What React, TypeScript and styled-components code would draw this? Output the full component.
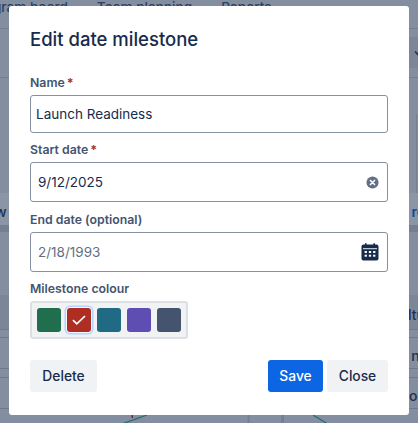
import React from 'react';
import styled, { createGlobalStyle } from 'styled-components';

const GlobalStyle = createGlobalStyle`
  html, body {
    margin: 0;
    padding: 0;
    background: #8590a2;
  }
  * {
    box-sizing: border-box;
  }
`;

const Page = styled.div`
  position: relative;
  width: 418px;
  height: 423px;
  overflow: hidden;
  font-family: Inter, 'Liberation Sans', sans-serif;
  color: #172b4d;
`;

const Backdrop = styled.div`
  display: flex;
  flex-direction: column;
  height: 100%;
  background: #838ea0;
`;

const Nav = styled.div`
  display: flex;
  gap: 29px;
  height: 29px;
  padding-top: 1px;
  margin-left: -29px;
  border-bottom: 1px solid #75808f;
  font-size: 13.6px;
  font-weight: 500;
  color: #2e4060;
  white-space: nowrap;
  line-height: 13px;
`;

const Band = styled.div<{ $h: number; $bg?: string; $line?: string }>`
  display: flex;
  justify-content: space-between;
  align-items: center;
  height: ${p => p.$h}px;
  padding-top: 5px;
  background: ${p => p.$bg ?? 'transparent'};
  border-bottom: ${p => (p.$line ? `1px solid ${p.$line}` : 'none')};
  font-size: 14px;
  font-weight: 500;
  white-space: nowrap;
  overflow: hidden;
`;

const ToolbarBand = styled.div`
  display: flex;
  justify-content: flex-end;
  align-items: center;
  height: 31px;
  margin-left: 120px;
  background: #7b8699;
`;

const ColumnRule = styled.div`
  align-self: flex-end;
  width: 1px;
  height: 79px;
  margin-right: 1px;
  background: #76818f;
`;

const BandLeft = styled.span`
  margin-left: -5px;
  color: #1f2f4f;
`;

const BandRight = styled.span<{ $color?: string }>`
  margin-right: -7px;
  font-weight: ${p => (p.$color ? 600 : 500)};
  color: ${p => p.$color ?? '#1f2f4f'};
`;

const Chevron = styled.svg`
  margin-right: -4px;
`;

const Links = styled.svg`
  position: absolute;
  left: 0;
  bottom: 0;
`;

const Modal = styled.div`
  position: absolute;
  left: 9px;
  top: 6px;
  width: 400px;
  height: 409px;
  padding: 21px 21px 23px;
  display: flex;
  flex-direction: column;
  background: #fff;
  border-radius: 3px;
`;

const Title = styled.h1`
  margin: 0 0 24px;
  font-size: 18.5px;
  line-height: 25px;
  font-weight: 500;
  color: #172b4d;
`;

const Field = styled.div<{ $gap?: number }>`
  display: flex;
  flex-direction: column;
  margin-bottom: ${p => p.$gap ?? 0}px;
`;

const Label = styled.label`
  display: flex;
  align-items: center;
  gap: 2px;
  height: 13px;
  margin-bottom: 6px;
  font-size: 12.3px;
  font-weight: 600;
  line-height: 13px;
  color: #44546f;
`;

const Star = styled.span`
  color: #ae2e24;
  font-weight: 700;
`;

const InputBox = styled.div<{ $h: number }>`
  display: flex;
  align-items: center;
  height: ${p => p.$h}px;
  border: 1px solid #8590a2;
  border-radius: 3px;
  background: #fff;
`;

const NameInput = styled.input`
  flex: 1;
  min-width: 0;
  height: 100%;
  padding: 0 5px;
  border: 0;
  outline: 0;
  background: transparent;
  font: 400 13.5px Inter, 'Liberation Sans', sans-serif;
  color: #172b4d;
`;

const DateInput = styled(NameInput)<{ $muted?: boolean }>`
  padding: 0 7px;
  font-size: 13.5px;
  color: ${p => (p.$muted ? '#626f86' : '#172b4d')};
`;

const IconSlot = styled.span<{ $right: number }>`
  display: flex;
  align-items: center;
  justify-content: center;
  width: 24px;
  height: 24px;
  margin-right: ${p => p.$right}px;
`;

const Palette = styled.div`
  display: flex;
  align-self: flex-start;
  gap: 6px;
  padding: 5px;
  border: 2px solid #dcdfe4;
  border-radius: 3px;
  background: #f1f2f4;
`;

const Swatch = styled.button<{ $color: string; $selected?: boolean }>`
  display: flex;
  align-items: center;
  justify-content: center;
  width: 24px;
  height: 24px;
  padding: 0;
  border: 0;
  border-radius: 3px;
  background: ${p => p.$color};
  box-shadow: ${p => (p.$selected ? '0 0 0 1px #f4f8ff, 0 0 0 2.5px #b3d4ff' : 'none')};
`;

const Footer = styled.div`
  display: flex;
  justify-content: space-between;
  margin-top: auto;
`;

const ButtonGroup = styled.div`
  display: flex;
  gap: 4px;
`;

const Button = styled.button<{ $primary?: boolean; $w: number }>`
  width: ${p => p.$w}px;
  height: 32px;
  padding: 0;
  border: 0;
  border-radius: 3px;
  background: ${p => (p.$primary ? '#0c66e4' : '#f1f2f4')};
  color: ${p => (p.$primary ? '#fff' : '#172b4d')};
  font: 500 13.8px Inter, 'Liberation Sans', sans-serif;
`;

const ClearIcon = () => (
  <svg width="13" height="13" viewBox="0 0 14 14">
    <circle cx="7" cy="7" r="6.5" fill="#626f86" />
    <path d="M4.8 4.8l4.4 4.4M9.2 4.8l-4.4 4.4" stroke="#fff" strokeWidth="1.7" strokeLinecap="round" />
  </svg>
);

const CalendarIcon = () => (
  <svg width="20" height="20" viewBox="0 0 20 20">
    <path
      fill="#172b4d"
      d="M3.5 2.5H5V1.2h1.6v1.3h6.8V1.2H15v1.3h1.5A2 2 0 0 1 18.5 4.5v12a2 2 0 0 1-2 2h-13a2 2 0 0 1-2-2v-12a2 2 0 0 1 2-2z"
    />
    <path fill="#fff" d="M3 6.2h14v1H3z" opacity="0.9" />
    <g fill="#fff">
      <rect x="4.6" y="9" width="2.3" height="2" />
      <rect x="8.85" y="9" width="2.3" height="2" />
      <rect x="13.1" y="9" width="2.3" height="2" />
      <rect x="4.6" y="12.7" width="2.3" height="2" />
      <rect x="8.85" y="12.7" width="2.3" height="2" />
      <rect x="13.1" y="12.7" width="2.3" height="2" />
    </g>
  </svg>
);

const colours = [
  { id: 'green', value: '#216e4e' },
  { id: 'red', value: '#ae2e24', selected: true },
  { id: 'teal', value: '#206a83' },
  { id: 'purple', value: '#5e4db2' },
  { id: 'slate', value: '#44546f' },
];

function App() {
  return (
    <Page>
      <GlobalStyle />
      <Backdrop>
        <Nav>
          <span>Program board</span>
          <span>Team planning</span>
          <span>Reports</span>
        </Nav>
        <Band $h={8} />
        <ToolbarBand>
          <Chevron width="8" height="6" viewBox="0 0 8 6">
            <path d="M1 1.5l3 3 3-3" fill="none" stroke="#1f2f4f" strokeWidth="1.6" />
          </Chevron>
        </ToolbarBand>
        <Band $h={10} $line="#737e90" />
        <Band $h={115}>
          <span />
          <ColumnRule />
        </Band>
        <Band $h={32} $bg="#8a95a6">
          <BandLeft>w</BandLeft>
          <BandRight $color="#0c4a9e">re</BandRight>
        </Band>
        <Band $h={7} $bg="#747f92" />
        <Band $h={63} />
        <Band $h={35} $bg="#7b8698" $line="#6e7a8c">
          <span />
          <BandRight>ltu</BandRight>
        </Band>
        <Band $h={8} $line="#6e7a8c" />
        <Band $h={31} $line="#6e7a8c">
          <span />
          <BandRight>nr</BandRight>
        </Band>
        <Band $h={9} $line="#6e7a8c" />
        <Band $h={31} $line="#6e7a8c">
          <span />
          <BandRight>os</BandRight>
        </Band>
      </Backdrop>
      <Links width="418" height="8" viewBox="0 415 418 8">
        <path d="M247.5 415h2v8h-2zM281 415h3v8h-3z" fill="#747f92" />
        <path d="M123 423.5L147 415M313 415L327 423.5" fill="none" stroke="#1f6f63" strokeWidth="1.2" />
        <path d="M131.5 415h1.5v3h-1.5z" fill="#7a2340" />
      </Links>
      <Modal>
        <Title>Edit date milestone</Title>
        <Field $gap={10}>
          <Label>
            Name<Star>*</Star>
          </Label>
          <InputBox $h={38}>
            <NameInput readOnly value="Launch Readiness" />
          </InputBox>
        </Field>
        <Field $gap={11}>
          <Label>
            Start date<Star>*</Star>
          </Label>
          <InputBox $h={40}>
            <DateInput readOnly value="9/12/2025" />
            <IconSlot $right={3}>
              <ClearIcon />
            </IconSlot>
          </InputBox>
        </Field>
        <Field $gap={10}>
          <Label>End date (optional)</Label>
          <InputBox $h={40}>
            <DateInput $muted readOnly value="2/18/1993" />
            <IconSlot $right={5}>
              <CalendarIcon />
            </IconSlot>
          </InputBox>
        </Field>
        <Field>
          <Label>Milestone colour</Label>
          <Palette>
            {colours.map(c => (
              <Swatch key={c.id} $color={c.value} $selected={c.selected}>
                {c.selected && (
                  <svg width="14" height="10" viewBox="0 0 14 10">
                    <path d="M1 5.2l3.8 3.6L13 1" fill="none" stroke="#fff" strokeWidth="1.7" />
                  </svg>
                )}
              </Swatch>
            ))}
          </Palette>
        </Field>
        <Footer>
          <Button $w={67}>Delete</Button>
          <ButtonGroup>
            <Button $primary $w={55}>
              Save
            </Button>
            <Button $w={61}>Close</Button>
          </ButtonGroup>
        </Footer>
      </Modal>
    </Page>
  );
}

export default App;
